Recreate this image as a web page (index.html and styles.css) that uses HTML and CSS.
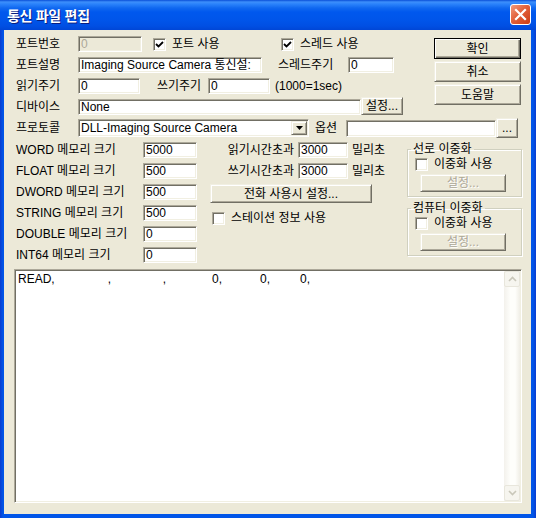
FILE: index.html
```html
<!DOCTYPE html>
<html lang="ko">
<head>
<meta charset="utf-8">
<title>통신 파일 편집</title>
<link rel="stylesheet" href="styles.css">
</head>
<body>
<div class="window">
  <div class="titlebar">
    <span class="title">통신 파일 편집</span>
    <span class="close"><svg width="13" height="13" viewBox="0 0 13 13"><path d="M2 2 L11 11 M11 2 L2 11" stroke="#fff" stroke-width="2.2" stroke-linecap="square"/></svg></span>
  </div>
  <div class="frame">
    <div class="client">
      <div class="top">
        <div class="topleft">
          <div class="row">
            <span class="lbl w62">포트번호</span>
            <span class="edit disabled w64">0</span>
            <span class="chk w128 ml11"><span class="box"><svg width="9" height="9" viewBox="0 0 9 9"><polyline points="1,4 3.5,6.5 8,2" fill="none" stroke="#000" stroke-width="1.8"/></svg></span>포트 사용</span>
            <span class="chk"><span class="box"><svg width="9" height="9" viewBox="0 0 9 9"><polyline points="1,4 3.5,6.5 8,2" fill="none" stroke="#000" stroke-width="1.8"/></svg></span>스레드 사용</span>
          </div>
          <div class="row">
            <span class="lbl w62">포트설명</span>
            <span class="edit w184">Imaging Source Camera 통신설:</span>
            <span class="lbl w70 ml16">스레드주기</span>
            <span class="edit w46">0</span>
          </div>
          <div class="row">
            <span class="lbl w62">읽기주기</span>
            <span class="edit w62e">0</span>
            <span class="lbl w51 ml17">쓰기주기</span>
            <span class="edit w62e">0</span>
            <span class="lbl ml5">(1000=1sec)</span>
          </div>
          <div class="row">
            <span class="lbl w62">디바이스</span>
            <span class="edit w283">None</span>
            <button class="btn small ml4">설정...</button>
          </div>
        </div>
        <div class="btncol">
          <button class="btn big default">확인</button>
          <button class="btn big">취소</button>
          <button class="btn big">도움말</button>
        </div>
      </div>
      <div class="row row5">
        <span class="lbl w62">프로토콜</span>
        <span class="select"><span class="seltext">DLL-Imaging Source Camera</span><span class="arrow"><svg width="7" height="4" viewBox="0 0 7 4"><path d="M0 0 H7 L3.5 4 Z" fill="#000"/></svg></span></span>
        <span class="lbl w31 ml6">옵션</span>
        <span class="edit w150"></span>
        <button class="btn dots ml2">...</button>
      </div>
      <div class="mid">
        <div class="memcol">
          <div class="row"><span class="lbl w128">WORD 메모리 크기</span><span class="edit w54">5000</span></div>
          <div class="row"><span class="lbl w128">FLOAT 메모리 크기</span><span class="edit w54">500</span></div>
          <div class="row"><span class="lbl w128">DWORD 메모리 크기</span><span class="edit w54">500</span></div>
          <div class="row"><span class="lbl w128">STRING 메모리 크기</span><span class="edit w54">500</span></div>
          <div class="row"><span class="lbl w128">DOUBLE 메모리 크기</span><span class="edit w54">0</span></div>
          <div class="row"><span class="lbl w128">INT64 메모리 크기</span><span class="edit w54">0</span></div>
        </div>
        <div class="timecol">
          <div class="row"><span class="lbl rlbl">읽기시간초과</span><span class="edit w50">3000</span><span class="lbl ml4">밀리초</span></div>
          <div class="row"><span class="lbl rlbl">쓰기시간초과</span><span class="edit w50">3000</span><span class="lbl ml4">밀리초</span></div>
          <button class="btn phone">전화 사용시 설정...</button>
          <span class="chk station"><span class="box"></span>스테이션 정보 사용</span>
        </div>
        <div class="groupcol">
          <fieldset class="group">
            <legend>선로 이중화</legend>
            <span class="chk gchk"><span class="box"></span>이중화 사용</span>
            <button class="btn gbtn" disabled>설정...</button>
          </fieldset>
          <fieldset class="group g2">
            <legend>컴퓨터 이중화</legend>
            <span class="chk gchk"><span class="box"></span>이중화 사용</span>
            <button class="btn gbtn" disabled>설정...</button>
          </fieldset>
        </div>
      </div>
      <div class="memo">
        <div class="memotext">
          <div class="line"><span class="c c1">READ,</span><span class="c c2">,</span><span class="c c3">,</span><span class="c c4">0,</span><span class="c c5">0,</span><span class="c c6">0,</span></div>
        </div>
        <div class="vscroll">
          <span class="sbtn"><svg width="9" height="6" viewBox="0 0 9 6"><polyline points="1,5 4.5,1.5 8,5" fill="none" stroke="#C9C7BA" stroke-width="1.6"/></svg></span>
          <span class="track"></span>
          <span class="sbtn"><svg width="9" height="6" viewBox="0 0 9 6"><polyline points="1,1 4.5,4.5 8,1" fill="none" stroke="#C9C7BA" stroke-width="1.6"/></svg></span>
        </div>
      </div>
    </div>
  </div>
</div>
</body>
</html>
```
FILE: styles.css
```css
html, body {
  margin: 0;
  padding: 0;
  background: #ffffff;
}
body {
  font-family: "Liberation Sans", "Noto Sans CJK KR", sans-serif;
  font-size: 12px;
  color: #000;
}
.window {
  width: 536px;
  height: 518px;
  display: flex;
  flex-direction: column;
}
.titlebar {
  height: 30px;
  flex: none;
  display: flex;
  align-items: center;
  justify-content: space-between;
  padding: 0 5px 0 7px;
  box-sizing: border-box;
  background: linear-gradient(to bottom, #0a4fd8 0px, #3d8ffb 2px, #2b83fb 4px, #1068f0 8px, #0058ee 12px, #0055ea 20px, #004fe3 26px, #0046d6 30px);
}
.title {
  color: #fff;
  font-family: "Noto Sans CJK KR", sans-serif;
  font-weight: bold;
  font-size: 14px;
  line-height: 16px;
  letter-spacing: -0.3px;
  text-shadow: 1px 1px 0 #0a1e80;
}
.close {
  width: 21px;
  height: 21px;
  box-sizing: border-box;
  border: 1px solid #fff;
  border-radius: 3px;
  background: linear-gradient(135deg, #f19a7d 0%, #e2613b 45%, #cc3c13 100%);
  display: flex;
  align-items: center;
  justify-content: center;
  margin-top: -1px;
}
.frame {
  flex: 1;
  display: flex;
  padding: 0 5px 4px 4px;
  background: linear-gradient(to right, #0a3ccf 0px, #0055e8 3px, #0055e8 calc(100% - 3px), #0a3ccf 100%);
}
.client {
  flex: 1;
  background: #ECE9D8;
  display: flex;
  flex-direction: column;
  padding: 6px 9px 11px 10px;
}
.top {
  display: flex;
  margin-left: 2px;
}
.topleft {
  width: 418px;
  display: flex;
  flex-direction: column;
  gap: 5px;
}
.btncol {
  width: 87px;
  display: flex;
  flex-direction: column;
  gap: 2px;
  margin-top: 2px;
}
.row {
  height: 16px;
  display: flex;
  align-items: center;
  flex: none;
}
.row5 {
  margin-top: 5px;
  margin-left: 2px;
}
.lbl {
  line-height: 16px;
  white-space: nowrap;
  flex: none;
}
.w62 { width: 62px; }
.w70 { width: 70px; }
.w51 { width: 51px; }
.w31 { width: 31px; }
.w128 { width: 127px; }
.ml2 { margin-left: 2px; }
.ml4 { margin-left: 4px; }
.ml5 { margin-left: 5px; }
.ml6 { margin-left: 6px; }
.ml11 { margin-left: 11px; }
.ml16 { margin-left: 16px; }
.ml17 { margin-left: 17px; }

.edit {
  height: 16px;
  box-sizing: border-box;
  background: #fff;
  border-style: solid;
  border-width: 1px;
  border-color: #ACA899 #fff #fff #ACA899;
  box-shadow: inset 1px 1px 0 #716F64, inset -1px -1px 0 #F1EFE2;
  padding: 0 2px 0 2px;
  line-height: 14px;
  white-space: nowrap;
  overflow: hidden;
  flex: none;
}
.edit.disabled {
  background: #ECE9D8;
  color: #ACA899;
}
.w64 { width: 64px; }
.w184 { width: 184px; }
.w46 { width: 46px; }
.w62e { width: 62px; }
.w283 { width: 283px; }
.w150 { width: 150px; height: 17px; }
.w54 { width: 54px; }
.w50 { width: 50px; }

.chk {
  display: flex;
  align-items: center;
  white-space: nowrap;
  line-height: 16px;
  height: 16px;
  flex: none;
}
.w128.chk { width: 128px; }
.box {
  width: 13px;
  height: 13px;
  box-sizing: border-box;
  background: #fff;
  border-style: solid;
  border-width: 1px;
  border-color: #ACA899 #fff #fff #ACA899;
  box-shadow: inset 1px 1px 0 #716F64, inset -1px -1px 0 #F1EFE2;
  display: flex;
  align-items: center;
  justify-content: center;
  margin-right: 6px;
  flex: none;
}

.btn {
  font-family: "Liberation Sans", "Noto Sans CJK KR", sans-serif;
  font-size: 12px;
  color: #000;
  background: #ECE9D8;
  box-sizing: border-box;
  padding: 0;
  margin: 0;
  border-style: solid;
  border-width: 1px;
  border-color: #F1EFE2 #716F64 #716F64 #F1EFE2;
  box-shadow: inset 1px 1px 0 #fff, inset -1px -1px 0 #ACA899;
  display: flex;
  align-items: center;
  justify-content: center;
  line-height: 14px;
  white-space: nowrap;
  flex: none;
}
.btn.big {
  width: 87px;
  height: 21px;
}
.btn.default {
  border-color: #000;
  box-shadow: inset 1px 1px 0 #fff, inset -1px -1px 0 #716F64, inset -2px -2px 0 #ACA899;
}
.btn.small {
  width: 42px;
  height: 18px;
  margin-top: -2px;
}
.btn.dots {
  width: 22px;
  height: 20px;
}
.btn:disabled {
  color: #ACA899;
  text-shadow: 1px 1px 0 #fff;
}

.select {
  width: 231px;
  height: 18px;
  box-sizing: border-box;
  background: #fff;
  border-style: solid;
  border-width: 1px;
  border-color: #ACA899 #fff #fff #ACA899;
  box-shadow: inset 1px 1px 0 #716F64, inset -1px -1px 0 #F1EFE2;
  display: flex;
  align-items: center;
  padding: 1px 1px 1px 2px;
  flex: none;
}
.seltext {
  flex: 1;
  line-height: 14px;
  white-space: nowrap;
}
.arrow {
  width: 16px;
  height: 14px;
  box-sizing: border-box;
  background: #ECE9D8;
  border-style: solid;
  border-width: 1px;
  border-color: #F1EFE2 #716F64 #716F64 #F1EFE2;
  box-shadow: inset 1px 1px 0 #fff, inset -1px -1px 0 #ACA899;
  display: flex;
  align-items: center;
  justify-content: center;
}

.mid {
  display: flex;
  margin-top: 6px;
  margin-left: 2px;
}
.memcol {
  width: 194px;
  display: flex;
  flex-direction: column;
  gap: 5px;
}
.timecol {
  width: 197px;
  display: flex;
  flex-direction: column;
  gap: 5px;
}
.rlbl {
  width: 88px;
  text-align: right;
  padding-right: 4px;
  box-sizing: border-box;
}
.btn.phone {
  width: 162px;
  height: 19px;
}
.chk.station {
  margin-top: 2px;
  margin-left: 2px;
}
.groupcol {
  width: 115px;
  display: flex;
  flex-direction: column;
}
.group {
  margin: 0;
  padding: 0 0 4px 3px;
  border: 1px solid #D0D0BF;
  box-shadow: inset 1px 1px 0 #fff, 1px 1px 0 #fff;
  display: flex;
  flex-direction: column;
  min-width: 0;
}
.group legend {
  padding: 0 2px;
  line-height: 14px;
  height: 14px;
  font-size: 12px;
  white-space: nowrap;
}
.group.g2 {
  margin-top: 4px;
}
.gchk {
  margin-top: 0;
  margin-left: 4px;
}
.btn.gbtn {
  width: 86px;
  height: 18px;
  margin-top: 2px;
  margin-left: 9px;
}

.memo {
  flex: 1;
  margin-top: 6px;
  display: flex;
  box-sizing: border-box;
  background: #fff;
  border-style: solid;
  border-width: 1px;
  border-color: #ACA899 #fff #fff #ACA899;
  box-shadow: inset 1px 1px 0 #716F64, inset -1px -1px 0 #F1EFE2;
  padding: 1px;
}
.memotext {
  flex: 1;
  padding: 1px 2px;
}
.line {
  display: flex;
  line-height: 14px;
  white-space: pre;
}
.c {
  display: inline-block;
  text-align: right;
}
.c1 { width: 37px; text-align: left; }
.c2 { width: 56px; }
.c3 { width: 55px; }
.c4 { width: 56px; }
.c5 { width: 48px; }
.c6 { width: 40px; }
.vscroll {
  width: 16px;
  display: flex;
  flex-direction: column;
  background: linear-gradient(to right, #F3F1EC, #FEFEFB 40%, #FEFEFB 70%, #F0EEE6);
}
.sbtn {
  height: 16px;
  box-sizing: border-box;
  border: 1px solid #E8E6DC;
  border-radius: 2px;
  background: #F6F5EF;
  display: flex;
  align-items: center;
  justify-content: center;
}
.track {
  flex: 1;
}
```
